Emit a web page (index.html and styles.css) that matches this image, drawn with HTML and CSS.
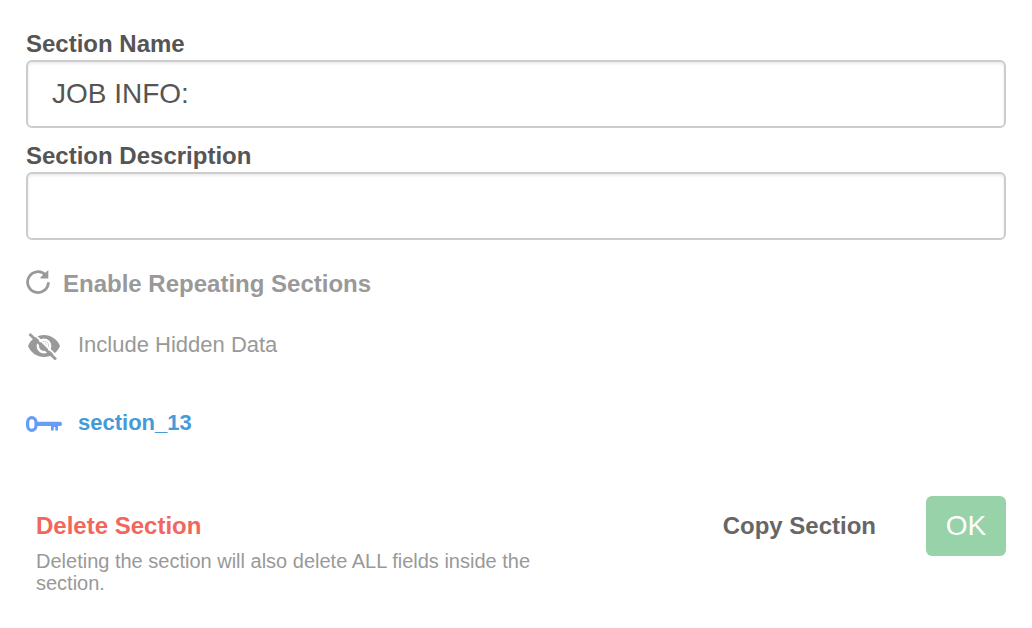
FILE: index.html
```html
<!DOCTYPE html>
<html lang="en">
<head>
<meta charset="utf-8">
<title>Section settings</title>
<link rel="stylesheet" href="styles.css">
</head>
<body>
<form class="section-form">
  <div class="field">
    <label for="section-name">Section Name</label>
    <input id="section-name" type="text" value="JOB INFO:">
  </div>
  <div class="field">
    <label for="section-description">Section Description</label>
    <input id="section-description" type="text">
  </div>
  <button class="option option-repeat" type="button">
    <svg class="icon-repeat" viewBox="0 0 24 24" aria-hidden="true">
      <path d="M19.4 4.8A10.4 10.4 0 1 0 22.4 12.2" fill="none" stroke="currentColor" stroke-width="2.8"/>
      <path d="M22.3 0V8.6H14.5V7.2Z" fill="currentColor"/>
    </svg>
    <span>Enable Repeating Sections</span>
  </button>
  <button class="option option-hidden" type="button">
    <svg class="icon-wide" viewBox="0 0 36 28" aria-hidden="true">
      <path d="M2 14C5 7 11 3 18 3S31 7 34 14C31 21 25 25 18 25S5 21 2 14Z" fill="currentColor"/>
      <circle cx="18" cy="14" r="6.2" fill="none" stroke="#fff" stroke-width="2.4"/>
      <path d="M17.5 10.2A3.8 3.8 0 0 1 21.8 14.5" fill="none" stroke="#fff" stroke-width="1.8"/>
      <path d="M6 0L33 26.4" stroke="#fff" stroke-width="1.8"/>
      <path d="M3.5 2L30 27.5" stroke="currentColor" stroke-width="2.8"/>
    </svg>
    <span>Include Hidden Data</span>
  </button>
  <button class="option option-key" type="button">
    <svg class="icon-wide" viewBox="0 0 36 28" aria-hidden="true">
      <rect x="1.6" y="7.6" width="8.4" height="12.8" rx="4.2" ry="4.8" fill="none" stroke="#669df6" stroke-width="3.2"/>
      <path d="M10 11.8H34.2Q36 11.8 36 13.9T34.2 16H32V20.5H29.3V17H27.7V20.5H25V16H10Z" fill="#669df6"/>
    </svg>
    <span>section_13</span>
  </button>
  <footer class="actions">
    <div class="delete">
      <button class="text-button delete-button" type="button">Delete Section</button>
      <p>Deleting the section will also delete ALL fields inside the section.</p>
    </div>
    <div class="confirm">
      <button class="text-button" type="button">Copy Section</button>
      <button class="ok-button" type="submit">OK</button>
    </div>
  </footer>
</form>
</body>
</html>
```
FILE: styles.css
```css
* {
  box-sizing: border-box;
}

body {
  margin: 0;
  background: #fff;
  color: #555;
  font-family: "Liberation Sans", Arial, sans-serif;
}

button,
input {
  font-family: inherit;
}

button {
  margin: 0;
  padding: 0;
  border: 0;
  background: none;
  cursor: pointer;
}

.section-form {
  display: flex;
  flex-direction: column;
  align-items: stretch;
  padding: 30px 26px;
}

.field {
  display: flex;
  flex-direction: column;
  gap: 2px;
  margin-bottom: 14px;
}

.field label {
  font-size: 24px;
  font-weight: bold;
  line-height: 28px;
}

.field input {
  width: 100%;
  height: 68px;
  padding: 0 24px;
  border: 2px solid #ccc;
  border-radius: 6px;
  background: #fff;
  box-shadow: inset 0 2px 3px rgba(0, 0, 0, 0.08);
  color: #555;
  font-size: 28px;
}

.option {
  display: flex;
  align-items: flex-start;
  align-self: flex-start;
  gap: 16px;
  color: #999;
  font-size: 22px;
  line-height: 26px;
}

.option-repeat {
  gap: 13px;
  margin-top: 16px;
  font-size: 24px;
  font-weight: bold;
  line-height: 28px;
}

.option-hidden {
  margin-top: 34px;
}

.option-key {
  margin-top: 50px;
  color: #469bd6;
  font-weight: bold;
}

.icon-repeat {
  width: 24px;
  height: 24px;
}

.icon-wide {
  width: 36px;
  height: 28px;
}

.actions {
  display: flex;
  align-items: flex-start;
  justify-content: space-between;
  margin-top: 58px;
}

.delete {
  width: 540px;
  padding: 16px 10px 0;
}

.delete p {
  margin: 10px 0 0;
  color: #999;
  font-size: 20px;
  line-height: 22px;
}

.text-button {
  color: #666;
  font-size: 24px;
  font-weight: bold;
  line-height: 28px;
}

.delete-button {
  color: #f2665c;
}

.confirm {
  display: flex;
  align-items: center;
  gap: 50px;
}

.ok-button {
  width: 80px;
  height: 60px;
  border-radius: 6px;
  background: #97d2a9;
  color: #fff;
  font-size: 28px;
}
```
